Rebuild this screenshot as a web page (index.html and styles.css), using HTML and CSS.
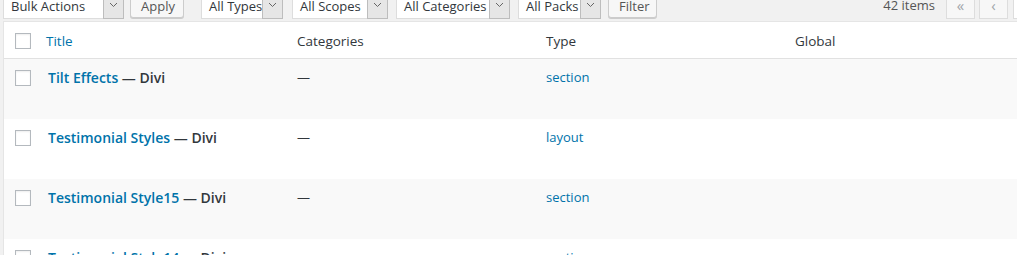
FILE: index.html
```html
<!DOCTYPE html>
<html lang="en">
<head>
    <meta charset="UTF-8">
    <meta name="viewport" content="width=device-width, initial-scale=1.0">
    <title>Library</title>
    <link rel="stylesheet" href="styles.css">
</head>
<body>
    <div class="wrap">
        <div class="tablenav">
            <div class="actions">
                <div class="select sel-bulk"><span>Bulk Actions</span><i class="arrow"><svg width="9" height="6" viewBox="0 0 9 6"><polyline points="1,1 4.5,4.5 8,1" fill="none" stroke="#666" stroke-width="1"/></svg></i></div>
                <button class="button btn-apply">Apply</button>
                <div class="select sel-types"><span>All Types</span><i class="arrow"><svg width="9" height="6" viewBox="0 0 9 6"><polyline points="1,1 4.5,4.5 8,1" fill="none" stroke="#666" stroke-width="1"/></svg></i></div>
                <div class="select sel-scopes"><span>All Scopes</span><i class="arrow"><svg width="9" height="6" viewBox="0 0 9 6"><polyline points="1,1 4.5,4.5 8,1" fill="none" stroke="#666" stroke-width="1"/></svg></i></div>
                <div class="select sel-cats"><span>All Categories</span><i class="arrow"><svg width="9" height="6" viewBox="0 0 9 6"><polyline points="1,1 4.5,4.5 8,1" fill="none" stroke="#666" stroke-width="1"/></svg></i></div>
                <div class="select sel-packs"><span>All Packs</span><i class="arrow"><svg width="9" height="6" viewBox="0 0 9 6"><polyline points="1,1 4.5,4.5 8,1" fill="none" stroke="#666" stroke-width="1"/></svg></i></div>
                <button class="button btn-filter">Filter</button>
            </div>
            <div class="pages">
                <span class="count">42 items</span>
                <span class="page-btn">&laquo;</span>
                <span class="page-btn">&lsaquo;</span>
                <span class="page-input"></span>
            </div>
        </div>
        <table class="list">
            <colgroup>
                <col class="c-check">
                <col class="c-title">
                <col class="c-cats">
                <col class="c-type">
                <col>
            </colgroup>
            <thead>
                <tr>
                    <th class="check"><span class="box"></span></th>
                    <th><a href="#">Title</a></th>
                    <th>Categories</th>
                    <th>Type</th>
                    <th>Global</th>
                </tr>
            </thead>
            <tbody>
                <tr>
                    <td class="check"><span class="box"></span></td>
                    <td class="row-title"><a href="#">Tilt Effects</a> &mdash; Divi</td>
                    <td>&mdash;</td>
                    <td><a href="#">section</a></td>
                    <td></td>
                </tr>
                <tr>
                    <td class="check"><span class="box"></span></td>
                    <td class="row-title"><a href="#">Testimonial Styles</a> &mdash; Divi</td>
                    <td>&mdash;</td>
                    <td><a href="#">layout</a></td>
                    <td></td>
                </tr>
                <tr>
                    <td class="check"><span class="box"></span></td>
                    <td class="row-title"><a href="#">Testimonial Style15</a> &mdash; Divi</td>
                    <td>&mdash;</td>
                    <td><a href="#">section</a></td>
                    <td></td>
                </tr>
                <tr>
                    <td class="check"><span class="box"></span></td>
                    <td class="row-title"><a href="#">Testimonial Style14</a> &mdash; Divi</td>
                    <td>&mdash;</td>
                    <td><a href="#">section</a></td>
                    <td></td>
                </tr>
            </tbody>
        </table>
    </div>
</body>
</html>
```

FILE: styles.css
```css
body {
    margin: 0;
    background: #f1f1f1;
    font-family: "Open Sans", "Noto Sans", sans-serif;
    font-size: 13px;
    color: #32373c;
    overflow: hidden;
}
a {
    color: #0073aa;
    text-decoration: none;
}
.wrap {
    width: 1031px;
    padding-left: 3px;
}
.tablenav {
    display: flex;
    align-items: flex-end;
    margin-top: -10px;
    height: 29px;
    margin-bottom: 2px;
}
.actions {
    display: flex;
    align-items: flex-end;
}
.select {
    display: flex;
    align-items: stretch;
    height: 28px;
    box-sizing: border-box;
    background: #fff;
    border: 1px solid #ddd;
    border-right: none;
    font-size: 13px;
    margin-right: 8px;
}
.select span {
    flex: 1;
    padding-left: 7px;
    padding-top: 2px;
    line-height: 24px;
    color: #32373c;
    white-space: nowrap;
}
.select .arrow {
    width: 19px;
    background: #e6e6e6;
    border: 1px solid #bdbdbd;
    margin: -1px 0 -1px 0;
    display: flex;
    align-items: center;
    justify-content: center;
}
.sel-bulk { width: 121px; margin-right: 6px; }
.sel-types { width: 82px; margin-right: 9px; }
.sel-scopes { width: 96px; }
.sel-cats { width: 114px; }
.sel-packs { width: 83px; margin-right: 7px; }
.button {
    height: 28px;
    box-sizing: border-box;
    padding: 3px 10px 0;
    font-family: inherit;
    font-size: 13px;
    color: #555;
    background: #f7f7f7;
    border: 1px solid #ccc;
    border-radius: 3px;
    box-shadow: 0 1px 0 #ccc;
    margin-bottom: 1px;
}
.btn-apply { width: 54px; margin-right: 17px; }
.btn-filter { width: 49px; }
.pages {
    margin-left: auto;
    display: flex;
    align-items: flex-end;
    gap: 4px;
}
.count {
    font-size: 13px;
    color: #555;
    line-height: 28px;
    padding-top: 2px;
    margin-right: 7px;
}
.page-btn {
    width: 29px;
    height: 28px;
    box-sizing: border-box;
    border: 1px solid #ddd;
    background: #f7f7f7;
    color: #a0a5aa;
    font-size: 15px;
    text-align: center;
    line-height: 26px;
}
.page-input {
    width: 21px;
    height: 28px;
    box-sizing: border-box;
    border: 1px solid #ddd;
    border-right: none;
    background: #fff;
    margin-left: 1px;
}
.list {
    width: 1031px;
    border: 1px solid #e5e5e5;
    border-spacing: 0;
    background: #fff;
    table-layout: fixed;
}
.c-check { width: 32px; }
.c-title { width: 251px; }
.c-cats { width: 249px; }
.c-type { width: 249px; }
.list th {
    text-align: left;
    font-weight: 400;
    font-size: 13.5px;
    height: 37px;
    padding: 2px 10px 0;
    border-bottom: 1px solid #e1e1e1;
    box-sizing: border-box;
}
.list td {
    height: 60px;
    box-sizing: border-box;
    padding: 9px 10px 9px;
    vertical-align: top;
    line-height: 19px;
}
.list th.check,
.list td.check {
    padding: 0 0 0 11px;
}
.list td.check {
    padding-top: 11px;
}
.list th.check .box {
    margin-top: 1px;
}
.box {
    display: block;
    width: 16px;
    height: 16px;
    box-sizing: border-box;
    border: 1px solid #b4b9be;
    background: #fff;
    box-shadow: inset 0 1px 2px rgba(0, 0, 0, 0.07);
}
.list tbody tr:nth-child(odd) {
    background: #f9f9f9;
}
.list td.row-title {
    font-size: 14px;
    font-weight: 600;
    padding-left: 12px;
}
```
